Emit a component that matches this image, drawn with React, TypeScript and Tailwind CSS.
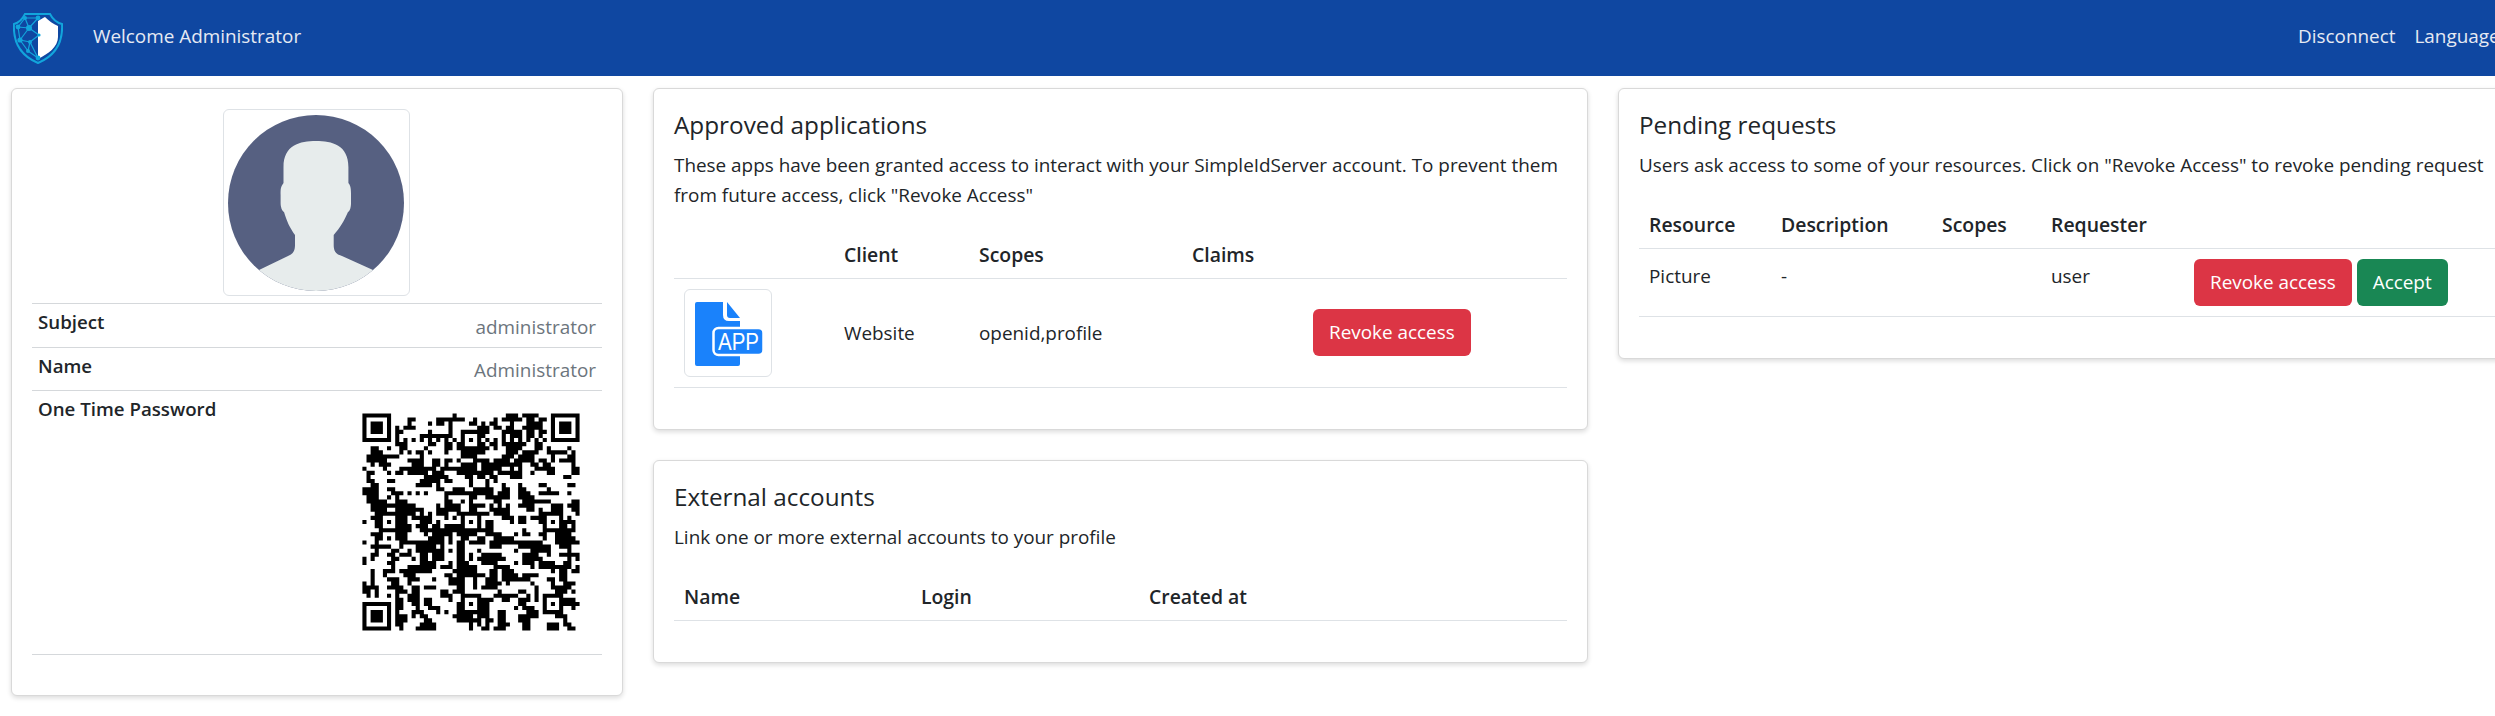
import React from "react";

const N = 53;
function buildQr(): string {
  const g: (number | null)[][] = Array.from({ length: N }, () => Array(N).fill(null));
  const finder = (r: number, c: number) => {
    for (let y = -1; y <= 7; y++) for (let x = -1; x <= 7; x++) {
      const yy = r + y, xx = c + x;
      if (yy < 0 || xx < 0 || yy >= N || xx >= N) continue;
      const inside = x >= 0 && x <= 6 && y >= 0 && y <= 6;
      const ring = x === 0 || x === 6 || y === 0 || y === 6;
      const core = x >= 2 && x <= 4 && y >= 2 && y <= 4;
      g[yy][xx] = inside && (ring || core) ? 1 : 0;
    }
  };
  finder(0, 0); finder(0, N - 7); finder(N - 7, 0);
  for (let i = 8; i < N - 8; i++) { g[6][i] = i % 2 === 0 ? 1 : 0; g[i][6] = i % 2 === 0 ? 1 : 0; }
  const al = [6, 26, 46];
  for (const r of al) for (const c of al) {
    if ((r === 6 && c === 6) || (r === 6 && c === 46) || (r === 46 && c === 6)) continue;
    for (let y = -2; y <= 2; y++) for (let x = -2; x <= 2; x++) {
      g[r + y][c + x] = Math.max(Math.abs(x), Math.abs(y)) === 1 ? 0 : 1;
    }
  }
  let s = 20230611;
  const rnd = () => { s = (s * 1664525 + 1013904223) >>> 0; return (s >>> 16) / 65536; };
  let d = "";
  for (let y = 0; y < N; y++) for (let x = 0; x < N; x++) {
    let v = g[y][x];
    if (v === null) {
      const left = x > 0 ? g[y][x - 1] : 0;
      const up = y > 0 ? g[y - 1][x] : 0;
      const p = 0.26 + 0.24 * (left === 1 ? 1 : 0) + 0.24 * (up === 1 ? 1 : 0);
      v = rnd() < p ? 1 : 0;
      g[y][x] = v;
    }
    if (v === 1) d += `M${x} ${y}h1v1h-1z`;
  }
  return d;
}
const qr = buildQr();

function Logo() {
  const c = "#12a5dc";
  const nodes: [number, number, number][] = [[12, 5, 2], [25, 5, 2.4], [5, 14, 2.4], [16, 15, 3], [26, 22, 1.6], [7, 27, 2.6], [17, 29, 2], [15, 38, 2], [25, 45, 2.4]];
  const links = "M12 5L25 5M12 5L5 14M12 5L16 15M25 5L16 15M5 14L16 15M16 15L26 22M16 15L7 27M5 14L7 27M26 22L17 29M7 27L17 29M7 27L15 38M17 29L15 38M17 29L25 45M15 38L25 45";
  return (
    <svg width="50" height="51" viewBox="0 0 50 51" className="shrink-0">
      <path d="M25 8C28 6 30 5 32 4C36 8 40 11 45 13V24C45 34 35 41 25 46Z" fill="#fff" />
      <path d="M1 11C5 10 9 7 12 1H37C40 7 45 10 49 11C50 28 44 42 25 50C6 42 0 28 1 11Z" fill="none" stroke={c} strokeWidth="2" />
      <path d={links} stroke={c} strokeWidth="1.2" fill="none" />
      {nodes.map(([x, y, r], i) => <circle key={i} cx={x} cy={y} r={r} fill={c} />)}
    </svg>
  );
}

function Avatar() {
  return (
    <svg width="176" height="176" viewBox="0 0 176 176">
      <defs><clipPath id="av"><circle cx="88" cy="88" r="88" /></clipPath></defs>
      <circle cx="88" cy="88" r="88" fill="#566081" />
      <path clipPath="url(#av)" fill="#e7ecec" d="M88 26C72 26 55.5 30 55.5 52V68C52.6 72 52.6 74 52.6 80V88C52.6 92 54 96 56 97C59 107 62 113 67 120V130C67 136 65 139 60 141L31 155V176H145V155L114 141C107 139 105.7 135 105.7 130V120C112 113 116 106 120 97C122 96 123 92 123 88V78C123 72 122 70 120.4 68V52C120.4 30 104 26 88 26Z" />
    </svg>
  );
}

function AppIcon() {
  const b = "#1a82fb";
  return (
    <svg width="86" height="86" viewBox="1 1 86 86">
      <path fill={b} d="M13 13H39V26Q39 32 45 32H56V75Q56 77 54 77H13Q11 77 11 75V15Q11 13 13 13Z" />
      <path fill={b} d="M43 13L56 29H46Q43 29 43 26Z" />
      <rect x="29.5" y="39" width="50" height="27" rx="5" fill={b} stroke="#fff" strokeWidth="2.5" />
      <text x="34" y="61" fill="#fff" fontSize="23" fontFamily="Liberation Sans, sans-serif" textLength="41" lengthAdjust="spacingAndGlyphs">APP</text>
    </svg>
  );
}

const btn = "inline-block h-[47px] leading-[47px] rounded-[6px] px-[16px] text-white whitespace-nowrap";
const card = "bg-white border border-[#d9d9d9] rounded-[6px] shadow-[0_2px_5px_rgba(0,0,0,0.14)]";
const title = "text-[24.3px] font-medium leading-[30px] text-[#212529] mt-[1px]";
const sub = "text-[18.9px] leading-[30px] mt-[10px] text-[#212529]";
const th = "text-left font-semibold text-[19.4px] px-[10px] pb-[8px] border-b border-[#dee2e6] h-[48px] align-bottom";
const td = "px-[10px] border-b border-[#dee2e6] align-middle";
const label = "font-semibold text-[18.7px] mt-[3px]";

export default function App() {
  return (
    <div className="w-[2495px] h-[716px] overflow-hidden bg-white text-[18.9px] leading-[30px] text-[#212529] font-['Open_Sans',sans-serif]">
      <nav className="h-[76px] bg-[#0f47a1] flex items-center text-[#e6eaf3]">
        <div className="ml-[13px] w-[80px]"><Logo /></div>
        <span className="-mt-[5px]">Welcome Administrator</span>
        <div className="flex-1" />
        <div className="w-[197px] shrink-0 flex gap-[19px] -mt-[5px] overflow-hidden whitespace-nowrap">
          <span>Disconnect</span>
          <span>Languages</span>
        </div>
      </nav>

      <div className="flex items-start pl-[11px] pt-[12px]">
        <div className={`${card} w-[612px] h-[608px] shrink-0 p-[20px]`}>
          <div className="flex justify-center pr-[2px]">
            <div className="w-[187px] h-[187px] border border-[#dee2e6] rounded-[6px] flex items-center justify-center">
              <Avatar />
            </div>
          </div>
          <div className="mt-[7px] border-t border-[#d5d8db] h-[44px] px-[6px] flex justify-between">
            <span className={label}>Subject</span>
            <span className="text-[#6c757d] mt-[8px]">administrator</span>
          </div>
          <div className="border-t border-[#d5d8db] h-[43px] px-[6px] flex justify-between">
            <span className={label}>Name</span>
            <span className="text-[#6c757d] mt-[7px]">Administrator</span>
          </div>
          <div className="border-t border-b border-[#d5d8db] h-[265px] px-[6px] flex justify-between">
            <span className={label}>One Time Password</span>
            <svg width="218" height="218" viewBox="-0.1 -0.1 53.2 53.2" className="mt-[22px] mr-[16px]">
              <path d={qr} fill="#000" />
            </svg>
          </div>
        </div>

        <div className="w-[935px] shrink-0 ml-[30px] flex flex-col gap-[30px]">
          <div className={`${card} h-[342px] p-[20px]`}>
            <h5 className={title}>Approved applications</h5>
            <p className={sub}>These apps have been granted access to interact with your SimpleIdServer account. To prevent them from future access, click "Revoke Access"</p>
            <table className="w-[893px] table-fixed border-collapse mt-[20px]">
              <thead>
                <tr>
                  <th className={`${th} w-[160px]`}></th>
                  <th className={`${th} w-[135px]`}>Client</th>
                  <th className={`${th} w-[213px]`}>Scopes</th>
                  <th className={`${th} w-[121px]`}>Claims</th>
                  <th className={th}></th>
                </tr>
              </thead>
              <tbody>
                <tr className="h-[109px]">
                  <td className={td}>
                    <div className="w-[88px] h-[88px] border border-[#dee2e6] rounded-[6px]"><AppIcon /></div>
                  </td>
                  <td className={td}>Website</td>
                  <td className={td}>openid,profile</td>
                  <td className={td}></td>
                  <td className={td}><span className={`${btn} bg-[#dc3545]`}>Revoke access</span></td>
                </tr>
              </tbody>
            </table>
          </div>

          <div className={`${card} h-[203px] p-[20px]`}>
            <h5 className={title}>External accounts</h5>
            <p className={sub}>Link one or more external accounts to your profile</p>
            <table className="w-[893px] table-fixed border-collapse mt-[20px]">
              <thead>
                <tr>
                  <th className={`${th} w-[237px]`}>Name</th>
                  <th className={`${th} w-[228px]`}>Login</th>
                  <th className={th}>Created at</th>
                </tr>
              </thead>
            </table>
          </div>
        </div>

        <div className={`${card} w-[970px] h-[271px] shrink-0 ml-[30px] p-[20px]`}>
          <h5 className={title}>Pending requests</h5>
          <p className={`${sub} whitespace-nowrap`}>Users ask access to some of your resources. Click on "Revoke Access" to revoke pending request</p>
          <table className="w-[928px] table-fixed border-collapse mt-[20px]">
            <thead>
              <tr>
                <th className={`${th} w-[132px]`}>Resource</th>
                <th className={`${th} w-[161px]`}>Description</th>
                <th className={`${th} w-[109px]`}>Scopes</th>
                <th className={`${th} w-[143px]`}>Requester</th>
                <th className={th}></th>
              </tr>
            </thead>
            <tbody>
              <tr className="h-[68px]">
                <td className={`${td} align-top pt-[12px]`}>Picture</td>
                <td className={`${td} align-top pt-[12px]`}>-</td>
                <td className={`${td} align-top pt-[12px]`}></td>
                <td className={`${td} align-top pt-[12px]`}>user</td>
                <td className={td}>
                  <div className="flex gap-[5px]">
                    <span className={`${btn} bg-[#dc3545]`}>Revoke access</span>
                    <span className={`${btn} bg-[#198754]`}>Accept</span>
                  </div>
                </td>
              </tr>
            </tbody>
          </table>
        </div>
      </div>
    </div>
  );
}
